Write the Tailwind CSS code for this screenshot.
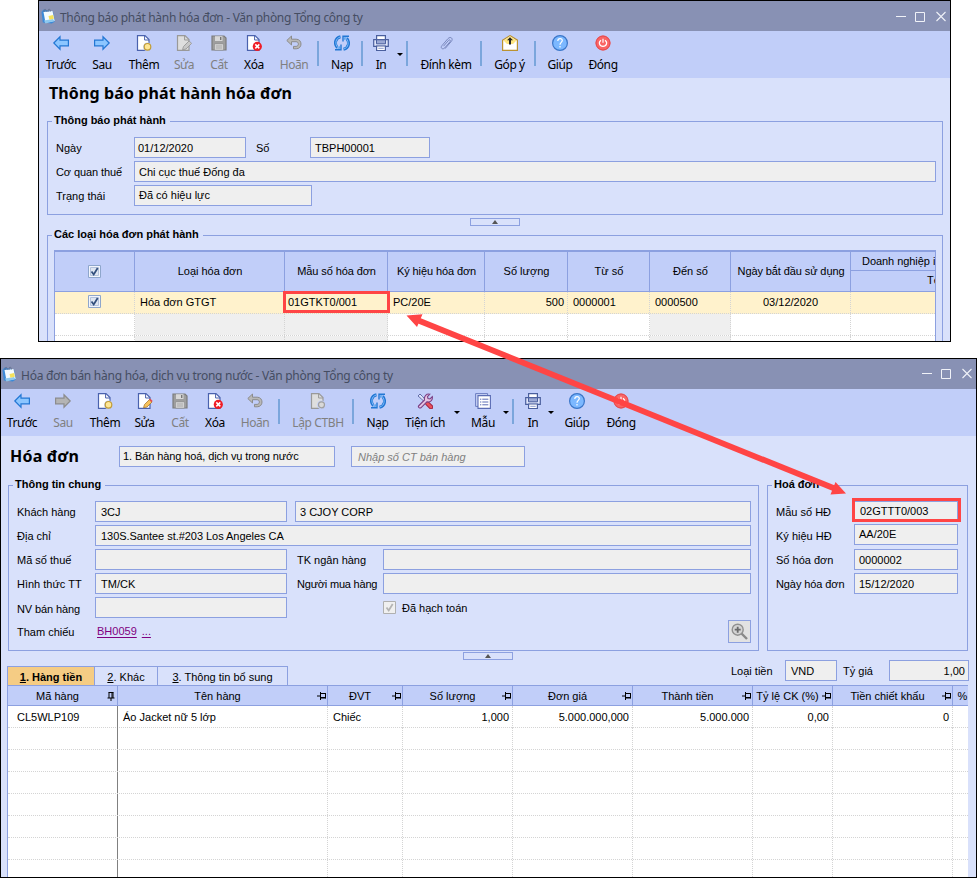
<!DOCTYPE html>
<html lang="vi">
<head>
<meta charset="utf-8">
<title>Hóa đơn</title>
<script src="https://cdn.jsdelivr.net/npm/@tailwindcss/browser@4"></script>
</head>
<body class="w-[977px] h-[878px] overflow-hidden bg-white relative text-black text-[11px] leading-[13px] font-['Liberation_Sans',Arial,sans-serif] whitespace-nowrap">

<svg class="hidden">
  <symbol id="app" viewBox="0 0 14 16"><path d="M.5 4l2-2.500 9.500 2 1.800 10-3 2-9-1z" fill="#3c8ad8"/><path d="M2.500 4l9-1 2.200 10-9.200 1.500z" fill="#f4fbff"/><path d="M3 12.500l9-1.500 1.500 2-9 2.500z" fill="#8ec8ee"/><path d="M7.500 8l4.500-1 .9 3.800-4.500.9z" fill="#f5e15a"/><path d="M3 4c0-3.500 2-3.500 2.400-.4M7 3.800c0-3.500 2-3.500 2.400-.4" fill="none" stroke="#64708c" stroke-width="1"/></symbol>
  <symbol id="left" viewBox="0 0 16 16"><path d="M.8 8L7 1.800V5.200h8.400v5.600H7v3.400z" fill="#8cc6ff" stroke="#2277d4" stroke-width="1.200"/></symbol>
  <symbol id="right" viewBox="0 0 16 16"><path d="M15.200 8L9 1.800V5.200H.6v5.600H9v3.400z" fill="#8cc6ff" stroke="#2277d4" stroke-width="1.200"/></symbol>
  <symbol id="rightoff" viewBox="0 0 16 16"><path d="M15.200 8L9 1.800V5.200H.6v5.600H9v3.400z" fill="#b4b4b4" stroke="#8c8c8c" stroke-width="1.200"/></symbol>
  <symbol id="page" viewBox="0 0 16 16"><path d="M1.500 .6h7.500l4 4v10.800H1.500z" fill="#fff" stroke="#4a62ae" stroke-width="1.200"/><path d="M8.600 1v4H13" fill="none" stroke="#4a62ae"/></symbol>
  <symbol id="pageoff" viewBox="0 0 16 16"><path d="M1.500 .6h7.500l4 4v10.800H1.500z" fill="#dedede" stroke="#999" stroke-width="1.200"/><path d="M8.600 1v4H13" fill="none" stroke="#999"/></symbol>
  <symbol id="add" viewBox="0 0 16 16"><use href="#page"/><circle cx="11.500" cy="11.800" r="4.400" fill="#c1cef9"/><circle cx="11.500" cy="11.800" r="3.300" fill="#ffe796" stroke="#c19c35" stroke-width="1.200"/></symbol>
  <symbol id="ctbh" viewBox="0 0 16 16"><use href="#pageoff"/><circle cx="11.500" cy="11.800" r="4.400" fill="#c1cef9"/><circle cx="11.500" cy="11.800" r="3" fill="#d9d9d9" stroke="#a0a0a0" stroke-width="1.200"/></symbol>
  <symbol id="edit" viewBox="0 0 16 16"><use href="#page"/><path d="M6.500 14.800l1-3.300 5-5 2.500 2.500-5 5z" fill="#f7c25a" stroke="#a87a32" stroke-width=".8"/><path d="M12 6.700l1.200-1.200 2.500 2.500-1.200 1.200z" fill="#e05050"/></symbol>
  <symbol id="editoff" viewBox="0 0 16 16"><use href="#pageoff"/><path d="M6.500 14.800l1-3.300 5.600-5.600 2.500 2.500-5.600 5.600z" fill="#c8c8c8" stroke="#989898" stroke-width=".9"/></symbol>
  <symbol id="save" viewBox="0 0 16 16"><path d="M1 1h12l2 2v12H1z" fill="#9e9e9e" stroke="#7c7c7c" stroke-width="1.200"/><path d="M4 1.200h7.500V6H4z" fill="#d8d8d8"/><path d="M9 2h1.400v3H9z" fill="#777"/><path d="M3.500 9h9v6h-9z" fill="#e4e4e4" stroke="#888" stroke-width=".6"/><path d="M4.500 11h7M4.500 13h7" stroke="#999"/></symbol>
  <symbol id="del" viewBox="0 0 16 16"><use href="#page"/><circle cx="11.300" cy="11.400" r="4.600" fill="#ef1c25"/><path d="M9.300 9.400l4 4m0-4l-4 4" stroke="#fff" stroke-width="1.500"/></symbol>
  <symbol id="undo" viewBox="0 0 16 16"><path d="M.8 5.500L5.500 1v3.200h4.700c6.400 0 6.400 9.600 0 9.600H7.500v-2.400h2.600c3 0 3-4.700 0-4.700H5.500V10z" fill="#b8b8b8" stroke="#8c8c8c"/></symbol>
  <symbol id="reload" viewBox="0 0 16 16"><path d="M6.500 1.800C.8 3 .2 9.300 3.400 12.600M9.500 14.200c5.700-1.200 6.300-7.500 3.100-10.800" fill="none" stroke="#2277d4" stroke-width="3"/><path d="M1 14.800h6V9.500M15 1.200H9v5.300" fill="none" stroke="#2277d4" stroke-width="1.400"/><path d="M3 13.800L6 10.800v3zM13 2.200l-3 3v-3z" fill="#5aa6f0"/><path d="M6.300 2C1.200 3.300.8 9.300 3.800 12.500M9.700 14c5.100-1.300 5.500-7.300 2.500-10.500" fill="none" stroke="#7fbcfa" stroke-width="1"/></symbol>
  <symbol id="print" viewBox="0 0 16 16"><path d="M3.600 5V.6h8.800V5" fill="#fff" stroke="#4a5f9e" stroke-width="1.200"/><path d="M.7 4.600h14.600v6.800H.7z" fill="#dfe5fa" stroke="#4a5f9e" stroke-width="1.200"/><path d="M3.500 4.800h9v4h-9z" fill="#9aa8d4" stroke="#4a5f9e"/><path d="M3.600 11h8.800v4.500H3.600z" fill="#fff" stroke="#4a5f9e" stroke-width="1.200"/><path d="M5.300 13.300h5.400" stroke="#8c9ccc"/></symbol>
  <symbol id="clip" viewBox="0 0 16 16"><path d="M5.500 11.200l5-5.800c1.200-1.300 2.600.1 1.500 1.400L6.600 13c-2 2-4.600-.1-2.700-2.300l6-7c2.600-2.800 5.700-.1 3.500 2.600l-6.400 7.400" fill="none" stroke="#7a88be" stroke-width="1"/></symbol>
  <symbol id="mail" viewBox="0 0 16 16"><path d="M.6 5.200L8 .6l7.400 4.600v10.200H.6z" fill="#fff" stroke="#bb9230" stroke-width="1.200"/><path d="M1.500 5.500L8 1.400l6.500 4.100-3.500 3.500H5z" fill="#ffe680"/><path d="M8 2.200l3 3.100H9v4.200H7V5.300H5z" fill="#222"/></symbol>
  <symbol id="help" viewBox="0 0 16 16"><circle cx="8" cy="8" r="7.400" fill="#7cb8ff" stroke="#3a76c8" stroke-width="1.200"/><path d="M5.800 6c0-3.200 4.500-3.200 4.500-.4C10.300 7.400 8 7.400 8 9.700M8 11v1.600" fill="none" stroke="#fff" stroke-width="1.200"/></symbol>
  <symbol id="power" viewBox="0 0 16 16"><circle cx="8" cy="8" r="7.500" fill="#fa6464"/><circle cx="8" cy="8" r="7" fill="none" stroke="#e04a50"/><path d="M6 5.300c-3 2-1.600 6 2 6s5-4 2-6M8 3.800v4" fill="none" stroke="#fff" stroke-width="1.200"/></symbol>
  <symbol id="tools" viewBox="0 0 16 16"><path d="M1 3L3 1l2.500 2.500L10 8.500 8.500 10 3.800 5.300z" fill="#dfe5fa" stroke="#5560a0" stroke-width=".9"/><path d="M10.300 10.300l3.700 3.700" stroke="#a02848" stroke-width="4.600" stroke-linecap="round"/><path d="M10.300 10.300l3.700 3.700" stroke="#e8505c" stroke-width="2.600" stroke-linecap="round"/><path d="M1.500 13l6-6C6.800 3 9.500.5 12.800 1.200L10.500 3.600l.5 2 2 .4 2.300-2.300c.6 3.500-2 5.800-5.400 5.100l-6 6c-1.300.7-3-.7-2.400-1.800z" fill="#e6c4e2" stroke="#7a3f86" stroke-width="1.100"/></symbol>
  <symbol id="form" viewBox="0 0 16 16"><path d="M.6 .6h12v12.800H.6z" fill="#c9d3f6" stroke="#6a7cc0"/><path d="M3 2.600h12.400v12.800H3z" fill="#fff" stroke="#5a6cb4" stroke-width="1.100"/><path d="M5 6.200h1.300m1 0h6M5 9h1.300m1 0h6M5 11.800h1.300m1 0h6" stroke="#5a6cb4"/></symbol>
  <symbol id="wbtn" viewBox="0 0 50 12"><path d="M0 5.500h10M40.500 1l9 9m0-9l-9 9" fill="none" stroke="#f0f2f8" stroke-width="1.100"/><path d="M19.500 1.500h9v9h-9z" fill="none" stroke="#f0f2f8"/></symbol>
  <symbol id="check" viewBox="0 0 13 13"><path d="M.5 .5h12v12H.5z" fill="#f2f5fc" stroke="#8ea6cc"/><path d="M2.500 2.500h8v8h-8z" fill="#dfe6f2" stroke="#b4c3dc"/><path d="M3.500 6.500l2.200 3 4-6.500" fill="none" stroke="#33507e" stroke-width="1.800"/></symbol>
  <symbol id="pin" viewBox="0 0 9 8"><path d="M0 4h3.500M8.500 1.500H4M8.500 6H4M3.500 0v8M8.500 1v5.500" fill="none" stroke="#000"/><path d="M4 5.500h5" stroke="#000"/></symbol>
  <symbol id="pind" viewBox="0 0 8 9"><path d="M1.500 .5h5M2 .5V6M6 .5V6M5 .5V6M.5 6h7M4 6v3" fill="none" stroke="#000"/></symbol>
</svg>

<!-- Invoice release notice -->
<section class="ml-[38px] w-[913px] h-[342px] border border-black bg-[#d9e1fb] overflow-hidden">
  <header class="h-[30px] bg-[#8891b4] flex items-center pl-[2px] pr-[4px] text-[12px] text-[#454d62] font-['Noto_Sans',sans-serif]">
    <svg class="w-[14px] h-[16px]"><use href="#app"/></svg>
    <span class="ml-[5px] mt-[2px] tracking-[-0.3px]">Thông báo phát hành hóa đơn - Văn phòng Tổng công ty</span>
    <svg class="ml-auto w-[50px] h-[12px] mt-0.5"><use href="#wbtn"/></svg>
  </header>
  <nav class="h-[47px] bg-[#c1cef9] flex text-[12px] leading-[16px] font-['Noto_Sans',sans-serif] tracking-[-0.4px]">
    <div class="w-[44px] flex flex-col items-center pt-1 gap-[6px]"><svg class="size-4"><use href="#left"/></svg><span>Trước</span></div>
    <div class="w-[38px] flex flex-col items-center pt-1 gap-[6px]"><svg class="size-4"><use href="#right"/></svg><span>Sau</span></div>
    <div class="w-[46px] flex flex-col items-center pt-1 gap-[6px]"><svg class="size-4"><use href="#add"/></svg><span>Thêm</span></div>
    <div class="w-[34px] flex flex-col items-center pt-1 gap-[6px] text-[#808080]"><svg class="size-4"><use href="#editoff"/></svg><span>Sửa</span></div>
    <div class="w-[36px] flex flex-col items-center pt-1 gap-[6px] text-[#808080]"><svg class="size-4"><use href="#save"/></svg><span>Cất</span></div>
    <div class="w-[34px] flex flex-col items-center pt-1 gap-[6px]"><svg class="size-4"><use href="#del"/></svg><span>Xóa</span></div>
    <div class="w-[46px] flex flex-col items-center pt-1 gap-[6px] text-[#808080]"><svg class="size-4"><use href="#undo"/></svg><span>Hoãn</span></div>
    <i class="w-0.5 h-[25px] mt-[10px] bg-[#7ba6dc]"></i>
    <div class="ml-1 w-[38px] flex flex-col items-center pt-1 gap-[6px]"><svg class="size-4"><use href="#reload"/></svg><span>Nạp</span></div>
    <i class="w-0.5 h-[25px] mt-[10px] bg-[#7ba6dc]"></i>
    <div class="ml-1 w-[28px] flex flex-col items-center pt-1 gap-[6px]"><svg class="size-4"><use href="#print"/></svg><span>In</span></div>
    <div class="w-[10px] flex justify-center pt-[22px]"><i class="h-0 border-x-[3px] border-t-[3px] border-x-transparent border-t-black"></i></div>
    <i class="ml-px w-0.5 h-[25px] mt-[10px] bg-[#7ba6dc]"></i>
    <div class="ml-1 w-[68px] flex flex-col items-center pt-1 gap-[6px]"><svg class="size-4"><use href="#clip"/></svg><span>Đính kèm</span></div>
    <i class="w-0.5 h-[25px] mt-[10px] bg-[#7ba6dc]"></i>
    <div class="ml-1 w-[47px] flex flex-col items-center pt-1 gap-[6px]"><svg class="size-4"><use href="#mail"/></svg><span>Góp ý</span></div>
    <i class="ml-px w-0.5 h-[25px] mt-[10px] bg-[#7ba6dc]"></i>
    <div class="ml-1 w-[40px] flex flex-col items-center pt-1 gap-[6px]"><svg class="size-4"><use href="#help"/></svg><span>Giúp</span></div>
    <div class="w-[46px] flex flex-col items-center pt-1 gap-[6px]"><svg class="size-4"><use href="#power"/></svg><span>Đóng</span></div>
  </nav>
  <h1 class="h-[43px] pl-[10px] pt-[4px] text-[16px] leading-[22px] font-bold tracking-[0.11px] font-['Noto_Sans',sans-serif]">Thông báo phát hành hóa đơn</h1>

  <div class="relative ml-2 w-[896px] h-[94px] border border-[#8ca0e0] pt-[15px] pl-[8px]">
    <b class="absolute left-[4px] -top-[8px] bg-[#d9e1fb] pl-0.5 pr-1">Thông báo phát hành</b>
    <div class="flex mb-[3px]">
      <span class="w-[78px] h-[21px] pt-[5px]">Ngày</span><span class="w-[112px] h-[21px] border border-[#8ca0e0] bg-[#efefef] pl-[3px] pt-[4px]">01/12/2020</span>
      <span class="ml-[10px] w-[54px] pt-[5px]">Số</span><span class="w-[120px] h-[21px] border border-[#8ca0e0] bg-[#efefef] pl-[4px] pt-[4px]">TBPH00001</span>
    </div>
    <div class="flex mb-[3px]"><span class="w-[78px] pt-[5px] tracking-[-0.1px]">Cơ quan thuế</span><span class="w-[802px] h-[21px] border border-[#8ca0e0] bg-[#efefef] pl-[4px] pt-[4px]">Chi cục thuế Đống đa</span></div>
    <div class="flex"><span class="w-[78px] pt-[5px]">Trạng thái</span><span class="w-[178px] h-[21px] border border-[#8ca0e0] bg-[#efefef] pl-[4px] pt-[3px]">Đã có hiệu lực</span></div>
  </div>
  <div class="ml-[431px] mt-[3px] w-[50px] h-[8px] border border-[#8ca0e0] flex justify-center pt-px"><i class="h-0 border-x-[3px] border-b-[4px] border-x-transparent border-b-[#555]"></i></div>

  <div class="relative ml-2 mt-[9px] w-[896px] h-[120px] border border-[#8ca0e0] pt-[14px] pl-[6px]">
    <b class="absolute left-[4px] -top-[8px] bg-[#d9e1fb] pl-0.5 pr-1">Các loại hóa đơn phát hành</b>
    <div class="w-[882px] border-t-2 border-x border-[#8ca0e0] bg-white overflow-hidden">
      <div class="grid grid-cols-[80px_150px_103px_97px_83px_82px_81px_120px_85px] h-[40px] bg-[#c1cef9] border-b border-[#8ca0e0] text-center leading-[38px] divide-x divide-[#8ca0e0]">
        <span class="flex items-center justify-center"><svg class="size-[13px]"><use href="#check"/></svg></span>
        <span class="pl-px">Loại hóa đơn</span><span class="pl-px tracking-[-0.1px]">Mẫu số hóa đơn</span><span class="pl-px tracking-[-0.1px]">Ký hiệu hóa đơn</span><span class="pl-px">Số lượng</span><span class="pl-px">Từ số</span><span class="pl-px">Đến số</span><span class="pl-px tracking-[-0.1px]">Ngày bắt đầu sử dụng</span>
        <span class="overflow-hidden leading-[19px] text-left"><span class="block h-[19px] border-b border-[#8ca0e0] pl-[11px] tracking-[-0.05px]">Doanh nghiệp i</span><span class="block pl-[76px]">Tê</span></span>
      </div>
      <div class="grid grid-cols-[80px_150px_103px_97px_83px_82px_81px_120px_85px] h-[22px] bg-[#fff2cc] border-b border-dotted border-[#d4d4d4] leading-[20px] divide-x divide-dotted divide-[#d4d4d4]">
        <span class="flex items-start pt-[3px] justify-center"><svg class="size-[13px]"><use href="#check"/></svg></span>
        <span class="pl-[5px]">Hóa đơn GTGT</span>
        <span class="relative pl-[3px]">01GTKT0/001<i class="absolute -left-[2px] -top-px w-[107px] h-[22px] border-[3px] border-[#ff4545] z-10"></i></span>
        <span class="pl-[5px]">PC/20E</span><span class="text-right pr-[3px]">500</span><span class="pl-[5px]">0000001</span><span class="pl-[5px]">0000500</span><span class="text-center">03/12/2020</span><span></span>
      </div>
      <div class="grid grid-cols-[80px_150px_103px_97px_83px_82px_81px_120px_85px] h-[22px] border-b border-dotted border-[#d4d4d4] divide-x divide-dotted divide-[#d4d4d4]">
        <span></span><span class="bg-[#efefef]"></span><span class="bg-[#efefef]"></span><span></span><span></span><span></span><span class="bg-[#efefef]"></span><span></span><span></span>
      </div>
      <div class="grid grid-cols-[80px_150px_103px_97px_83px_82px_81px_120px_85px] h-[22px] divide-x divide-dotted divide-[#d4d4d4]">
        <span></span><span class="bg-[#efefef]"></span><span class="bg-[#efefef]"></span><span></span><span></span><span></span><span class="bg-[#efefef]"></span><span></span><span></span>
      </div>
    </div>
  </div>
</section>

<!-- Domestic sales invoice -->
<section class="mt-[16px] w-[977px] h-[520px] border border-black bg-[#d9e1fb] overflow-hidden">
  <header class="h-[30px] bg-[#8891b4] flex items-center pl-px pr-[4px] text-[12px] text-[#454d62] font-['Noto_Sans',sans-serif]">
    <svg class="w-[14px] h-[16px]"><use href="#app"/></svg>
    <span class="ml-[5px] mt-[2px] tracking-[-0.26px]">Hóa đơn bán hàng hóa, dịch vụ trong nước - Văn phòng Tổng công ty</span>
    <svg class="ml-auto w-[50px] h-[12px]"><use href="#wbtn"/></svg>
  </header>
  <nav class="h-[47px] bg-[#c1cef9] flex text-[12px] leading-[16px] font-['Noto_Sans',sans-serif] tracking-[-0.4px]">
    <div class="w-[42px] flex flex-col items-center pt-1 gap-[6px]"><svg class="size-4"><use href="#left"/></svg><span>Trước</span></div>
    <div class="w-[40px] flex flex-col items-center pt-1 gap-[6px] text-[#808080]"><svg class="size-4"><use href="#rightoff"/></svg><span>Sau</span></div>
    <div class="w-[44px] flex flex-col items-center pt-1 gap-[6px]"><svg class="size-4"><use href="#add"/></svg><span>Thêm</span></div>
    <div class="w-[35px] flex flex-col items-center pt-1 gap-[6px]"><svg class="size-4"><use href="#edit"/></svg><span>Sửa</span></div>
    <div class="w-[36px] flex flex-col items-center pt-1 gap-[6px] text-[#808080]"><svg class="size-4"><use href="#save"/></svg><span>Cất</span></div>
    <div class="w-[34px] flex flex-col items-center pt-1 gap-[6px]"><svg class="size-4"><use href="#del"/></svg><span>Xóa</span></div>
    <div class="w-[46px] flex flex-col items-center pt-1 gap-[6px] text-[#808080]"><svg class="size-4"><use href="#undo"/></svg><span>Hoãn</span></div>
    <i class="w-0.5 h-[25px] mt-[10px] bg-[#7ba6dc]"></i>
    <div class="ml-1 w-[68px] flex flex-col items-center pt-1 gap-[6px] text-[#808080]"><svg class="size-4"><use href="#ctbh"/></svg><span>Lập CTBH</span></div>
    <i class="w-0.5 h-[25px] mt-[10px] bg-[#7ba6dc]"></i>
    <div class="ml-1 w-[39px] flex flex-col items-center pt-1 gap-[6px]"><svg class="size-4"><use href="#reload"/></svg><span>Nạp</span></div>
    <div class="w-[56px] flex flex-col items-center pt-1 gap-[6px]"><svg class="size-4"><use href="#tools"/></svg><span>Tiện ích</span></div>
    <div class="w-[8px] flex justify-center pt-[22px]"><i class="h-0 border-x-[3px] border-t-[3px] border-x-transparent border-t-black"></i></div>
    <div class="ml-[3px] w-[38px] flex flex-col items-center pt-1 gap-[6px]"><svg class="size-4"><use href="#form"/></svg><span>Mẫu</span></div>
    <div class="w-[8px] flex justify-center pt-[22px]"><i class="h-0 border-x-[3px] border-t-[3px] border-x-transparent border-t-black"></i></div>
    <i class="ml-0.5 w-0.5 h-[25px] mt-[10px] bg-[#7ba6dc]"></i>
    <div class="ml-[5px] w-[28px] flex flex-col items-center pt-1 gap-[6px]"><svg class="size-4"><use href="#print"/></svg><span>In</span></div>
    <div class="w-[8px] flex justify-center pt-[22px]"><i class="h-0 border-x-[3px] border-t-[3px] border-x-transparent border-t-black"></i></div>
    <div class="ml-0.5 w-[40px] flex flex-col items-center pt-1 gap-[6px]"><svg class="size-4"><use href="#help"/></svg><span>Giúp</span></div>
    <div class="ml-px w-[46px] flex flex-col items-center pt-1 gap-[6px]"><svg class="size-4"><use href="#power"/></svg><span>Đóng</span></div>
  </nav>
  <div class="flex h-[49px] pt-[10px] pl-[9px]">
    <h1 class="w-[109px] text-[16px] leading-[20px] font-bold tracking-[0.2px] font-['Noto_Sans',sans-serif]">Hóa đơn</h1>
    <span class="w-[216px] h-[21px] border border-[#8ca0e0] bg-[#efefef] pl-[3px] pt-[3px] tracking-[-0.1px]">1. Bán hàng hoá, dịch vụ trong nước</span>
    <span class="ml-4 w-[174px] h-[21px] border border-[#8ca0e0] bg-[#efefef] pl-[6px] pt-[4px] italic text-[#808080]">Nhập số CT bán hàng</span>
  </div>
  <div class="flex pl-[7px] gap-2">
    <div class="relative w-[751px] h-[166px] border border-[#8ca0e0] pt-[15px] pl-[8px] pr-[7px]">
      <b class="absolute left-[4px] -top-[8px] bg-[#d9e1fb] pl-0.5 pr-1">Thông tin chung</b>
      <div class="flex mb-[3px]"><span class="w-[78px] pt-[5px]">Khách hàng</span><span class="w-[192px] h-[21px] border border-[#8ca0e0] bg-[#efefef] pl-[5px] pt-[4px]">3CJ</span><span class="ml-2 w-[456px] h-[21px] border border-[#8ca0e0] bg-[#efefef] pl-[4px] pt-[4px]">3 CJOY CORP</span></div>
      <div class="flex mb-[3px]"><span class="w-[78px] pt-[5px]">Địa chỉ</span><span class="w-[656px] h-[21px] border border-[#8ca0e0] bg-[#efefef] pl-[5px] pt-[4px] tracking-[-0.04px]">130S.Santee st.#203 Los Angeles CA</span></div>
      <div class="flex mb-[3px]"><span class="w-[78px] pt-[5px]">Mã số thuế</span><span class="w-[192px] h-[21px] border border-[#8ca0e0] bg-[#efefef]"></span><span class="pl-[10px] w-[96px] pt-[5px]">TK ngân hàng</span><span class="w-[368px] h-[21px] border border-[#8ca0e0] bg-[#efefef]"></span></div>
      <div class="flex mb-[3px]"><span class="w-[78px] pt-[5px]">Hình thức TT</span><span class="w-[192px] h-[21px] border border-[#8ca0e0] bg-[#efefef] pl-[5px] pt-[4px]">TM/CK</span><span class="pl-[10px] w-[96px] pt-[5px] tracking-[-0.2px]">Người mua hàng</span><span class="w-[368px] h-[21px] border border-[#8ca0e0] bg-[#efefef]"></span></div>
      <div class="flex"><span class="w-[78px] pt-[6px] tracking-[-0.1px]">NV bán hàng</span><span class="w-[192px] h-[21px] border border-[#8ca0e0] bg-[#efefef]"></span>
        <svg class="ml-[96px] mt-[4px] size-[13px]" viewBox="0 0 13 13"><path d="M.5 .5h12v12H.5z" fill="#f0f0f0" stroke="#b0b0b0"/><path d="M3.500 6.500l2.200 3 4-6.500" fill="none" stroke="#b4b4b4" stroke-width="1.800"/></svg>
        <span class="ml-[6px] pt-[5px]">Đã hạch toán</span></div>
      <div class="flex items-start"><span class="w-[80px] pt-[8px]">Tham chiếu</span><span class="pt-[7px] text-[#800080] underline underline-offset-2">BH0059</span><span class="pt-[7px] ml-[5px] text-[#800080] underline underline-offset-2">...</span>
        <span class="ml-auto mt-[2px] size-[23px] border border-[#8ca0e0] bg-[#e2e2e2] flex items-center justify-center"><svg class="size-[17px]" viewBox="0 0 17 17"><path d="M10.500 10.500l5.500 5.500" stroke="#8a8a8a" stroke-width="2.400"/><circle cx="6.700" cy="6.700" r="5.500" fill="#d4d4d4" stroke="#909090" stroke-width="1.400"/><path d="M3.700 6.700h6M6.700 3.700v6" stroke="#6a6a6a" stroke-width="1.800"/></svg></span></div>
    </div>
    <div class="relative w-[201px] h-[166px] border border-[#8ca0e0] pt-[15px] pl-[8px]">
      <b class="absolute left-[4px] -top-[8px] bg-[#d9e1fb] pl-0.5 pr-1">Hoá đơn</b>
      <div class="flex mb-[2px]"><span class="w-[78px] pt-[5px]">Mẫu số HĐ</span><span class="relative w-[104px] h-[21px] border border-[#8ca0e0] bg-[#efefef] pl-[5px] pt-[3px]">02GTTT0/003<i class="absolute -left-[3px] -top-[4px] w-[109px] h-[24px] border-[3px] border-[#ff4545]"></i></span></div>
      <div class="flex mb-[4px]"><span class="w-[78px] pt-[6px]">Ký hiệu HĐ</span><span class="w-[104px] h-[21px] border border-[#8ca0e0] bg-[#efefef] pl-[4px] pt-[3px]">AA/20E</span></div>
      <div class="flex mb-[3px]"><span class="w-[78px] pt-[5px]">Số hóa đơn</span><span class="w-[104px] h-[21px] border border-[#8ca0e0] bg-[#efefef] pl-[4px] pt-[4px]">0000002</span></div>
      <div class="flex"><span class="w-[78px] pt-[5px] tracking-[-0.1px]">Ngày hóa đơn</span><span class="w-[104px] h-[21px] border border-[#8ca0e0] bg-[#efefef] pl-[4px] pt-[4px]">15/12/2020</span></div>
    </div>
  </div>
  <div class="ml-[462px] mt-px w-[50px] h-[8px] border border-[#8ca0e0] flex justify-center pt-px"><i class="h-0 border-x-[3px] border-b-[4px] border-x-transparent border-b-[#555]"></i></div>
  <div class="flex items-end h-[25px] pl-[6px] pr-[7px]">
    <div class="flex h-[19px] leading-[20px] border-t border-x border-[#8ca0e0] divide-x divide-[#8ca0e0] text-center">
      <b class="w-[87px] bg-[#f5cc84]"><u>1</u>. Hàng tiền</b><span class="w-[63px]"><u>2</u>. Khác</span><span class="w-[129px]"><u>3</u>. Thông tin bổ sung</span>
    </div>
    <div class="ml-auto flex h-[25px]">
      <span class="w-[54px] pt-[5px]">Loại tiền</span><span class="w-[52px] h-[21px] border border-[#8ca0e0] bg-[#efefef] pl-[5px] pt-[4px]">VND</span>
      <span class="w-[52px] pl-[6px] pt-[5px]">Tỷ giá</span><span class="w-[80px] h-[21px] border border-[#8ca0e0] bg-[#efefef] pr-[3px] pt-[4px] text-right">1,00</span>
    </div>
  </div>
  <div id="grid" class="ml-[6px] w-[961px] border-l border-[#8ca0e0] bg-white">
    <div class="grid grid-cols-[110px_210px_75px_110px_120px_120px_80px_120px_15px] h-[21px] bg-[#c1cef9] border-y border-[#8ca0e0] divide-x divide-[#8ca0e0] leading-[20px] text-center">
      <span class="flex items-center pr-[2px]"><span class="flex-1">Mã hàng</span><svg class="w-2 h-[9px]"><use href="#pind"/></svg></span>
      <span class="flex items-center pr-px"><span class="flex-1">Tên hàng</span><svg class="w-[9px] h-2"><use href="#pin"/></svg></span>
      <span class="flex items-center pr-px"><span class="flex-1">ĐVT</span><svg class="w-[9px] h-2"><use href="#pin"/></svg></span>
      <span class="flex items-center pr-px"><span class="flex-1">Số lượng</span><svg class="w-[9px] h-2"><use href="#pin"/></svg></span>
      <span class="flex items-center pr-px"><span class="flex-1">Đơn giá</span><svg class="w-[9px] h-2"><use href="#pin"/></svg></span>
      <span class="flex items-center pr-px"><span class="flex-1">Thành tiền</span><svg class="w-[9px] h-2"><use href="#pin"/></svg></span>
      <span class="flex items-center pr-px"><span class="flex-1">Tỷ lệ CK (%)</span><svg class="w-[9px] h-2"><use href="#pin"/></svg></span>
      <span class="flex items-center pr-px"><span class="flex-1">Tiền chiết khấu</span><svg class="w-[9px] h-2"><use href="#pin"/></svg></span>
      <span class="pl-1">%</span>
    </div>
    <div class="grid grid-cols-[110px_210px_75px_110px_120px_120px_80px_120px_15px] h-[22px] border-b border-dotted border-[#d4d4d4] leading-[22px] divide-x divide-dotted divide-[#d4d4d4]">
      <span class="border-solid! border-[#808080]! pl-[9px]">CL5WLP109</span><span class="pl-[5px]">Áo Jacket nữ 5 lớp</span><span class="pl-[5px]">Chiếc</span><span class="text-right pr-[3px]">1,000</span><span class="text-right pr-[3px]">5.000.000,000</span><span class="text-right pr-[3px]">5.000.000</span><span class="text-right pr-[3px]">0,00</span><span class="text-right pr-[3px]">0</span><span></span>
    </div>
    <template id="row">
      <div class="grid grid-cols-[110px_210px_75px_110px_120px_120px_80px_120px_15px] h-[22px] border-b border-dotted border-[#d4d4d4] divide-x divide-dotted divide-[#d4d4d4]">
        <span class="border-solid! border-[#808080]!"></span><span></span><span></span><span></span><span></span><span></span><span></span><span></span><span></span>
      </div>
    </template>
  </div>
</section>

<!-- Annotation linking the two form numbers -->
<svg class="absolute left-0 top-0 w-[977px] h-[878px] z-20 pointer-events-none"><path d="M416 319.500L837 489.500" stroke="#ff4545" stroke-width="5.800"/><path d="M406.500 315.500l16-1.200-5.500 12.700zM846 493.500l-15.500 1 5-12.500z" fill="#ff4545"/></svg>

<script>
const row = document.getElementById('row');
for (let i = 0; i < 7; i++) document.getElementById('grid').append(row.content.cloneNode(true));
</script>
</body>
</html>
